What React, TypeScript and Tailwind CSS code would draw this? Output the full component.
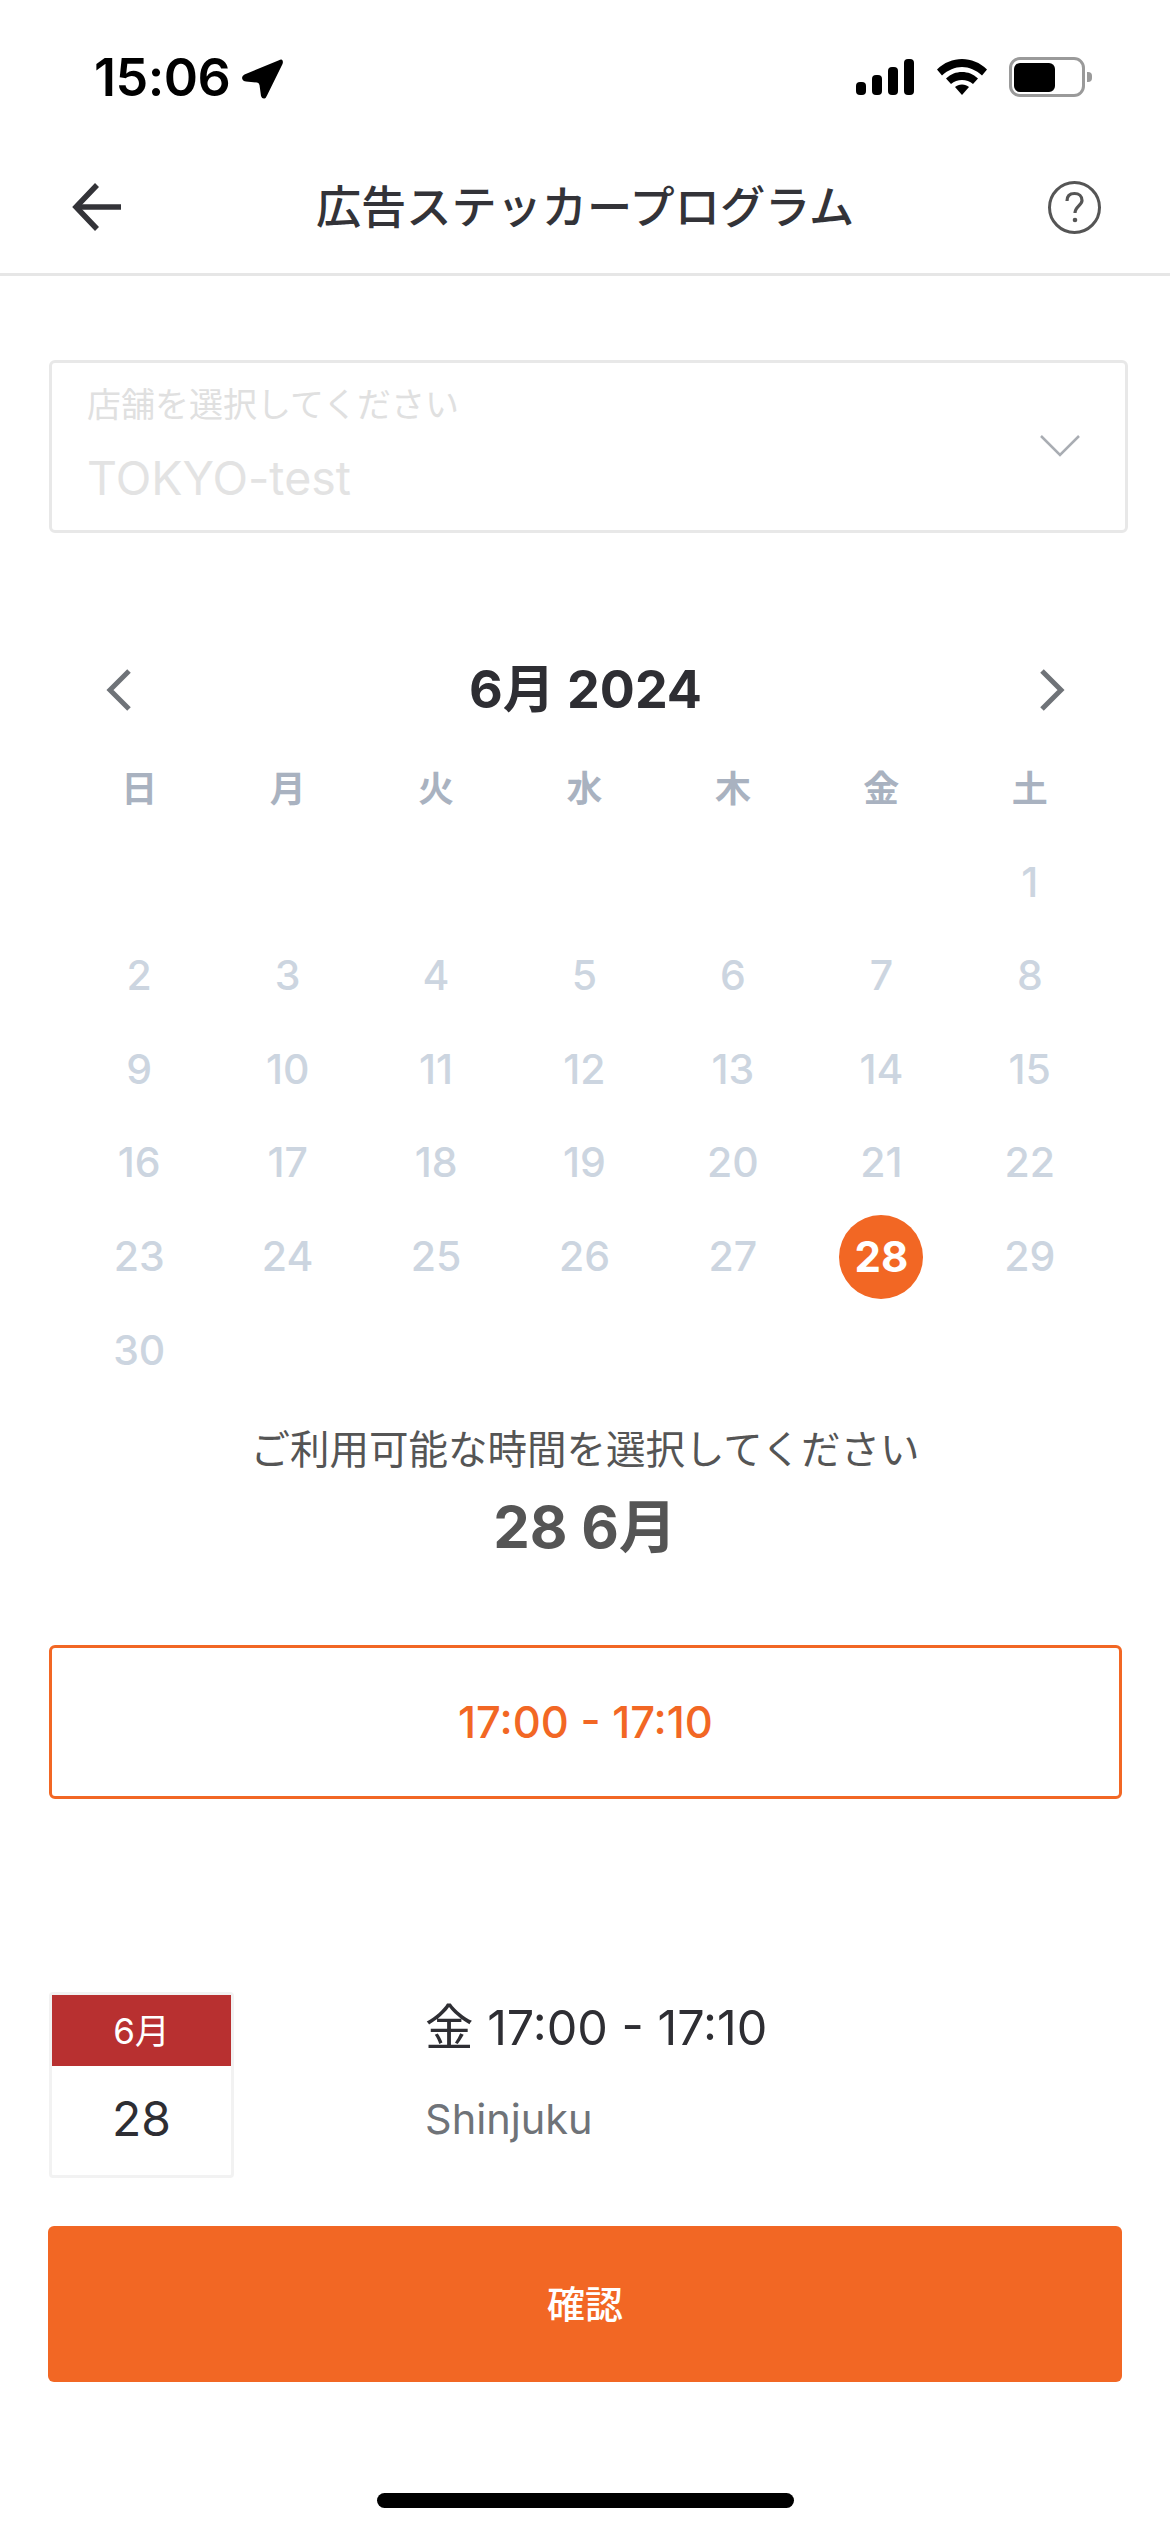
import React from "react";

const FONT = "[font-family:Inter,'Noto_Sans_CJK_JP',sans-serif]";
const WEEK = ["日", "月", "火", "水", "木", "金", "土"];
const DAYS: (number | null)[] = [null, null, null, null, null, null, ...Array.from({ length: 30 }, (_, i) => i + 1)];

function StatusBar() {
  return (
    <div className="flex h-[140px] items-start justify-between pt-[56px] pl-[94px] pr-[78px]">
      <div className="flex items-center gap-[12px]">
        <span className="text-[52px] leading-[44px] font-semibold text-black tracking-[-0.5px]">15:06</span>
        <svg width="41" height="40" viewBox="0 0 41 40" className="mt-[1px]">
          <path d="M37 1.2 L2.5 15.5 Q-1 17.5 0.5 20.5 Q1.5 22.5 4 22.5 L15 23.5 Q17 23.5 17.5 26 L19 37 Q20 40 22.5 39.5 Q24 39 25 36.5 L40.5 5 Q41.5 2 40 0.8 Q38.8 0.2 37 1.2Z" fill="#000" />
        </svg>
      </div>
      <div className="flex items-start pt-[3px]">
        <svg width="58" height="36" viewBox="0 0 58 36">
          <rect x="0" y="23" width="10" height="13" rx="4" fill="#000" />
          <rect x="16" y="16" width="10" height="20" rx="4" fill="#000" />
          <rect x="32" y="8" width="10" height="28" rx="4" fill="#000" />
          <rect x="48" y="0" width="10" height="36" rx="4" fill="#000" />
        </svg>
        <svg width="50" height="36" viewBox="0 0 50 36" className="ml-[23px]">
          <path d="M25 0 C34 0 43 3.5 50 10.5 L45 16.5 C39 11 32 8 25 8 C18 8 11 11 5 16.5 L0 10.5 C7 3.5 16 0 25 0Z" fill="#000" />
          <path d="M25 13 C31 13 36 15 41 19.5 L36 25 C33 22.5 29 21 25 21 C21 21 17 22.5 14 25 L9 19.5 C14 15 19 13 25 13Z" fill="#000" />
          <path d="M25 25.5 C28 25.5 30 26.5 32 28 L25 36 L18 28 C20 26.5 22 25.5 25 25.5Z" fill="#000" />
        </svg>
        <div className="ml-[22px] -mt-[2px] flex items-center">
          <div className="flex h-[40px] w-[76px] items-center rounded-[11px] border-[3px] border-[#9a9a9a] pl-[2px]">
            <div className="h-[29px] w-[41px] rounded-[6px] bg-black" />
          </div>
          <div className="ml-[2px] h-[10px] w-[5px] rounded-r-[4px] bg-[#9a9a9a]" />
        </div>
      </div>
    </div>
  );
}

function Header() {
  return (
    <div className="flex h-[136px] items-center justify-between border-b-[3px] border-[#e6e6e6] pl-[72px] pr-[69px]">
      <svg width="50" height="48" viewBox="0 0 50 48" fill="none" stroke="#333338" strokeWidth="5.5">
        <path d="M25 2 L4 24 L25 46" />
        <path d="M4 24 H49" />
      </svg>
      <div className="mt-[3px] text-[45.2px] leading-[60px] font-medium text-[#333338]">広告ステッカープログラム</div>
      <svg width="53" height="53" viewBox="0 0 53 53" fill="none" className="mt-[1px]">
        <circle cx="26.5" cy="26.5" r="25" stroke="#555" strokeWidth="3" />
        <path d="M19 20 C19 15 22 12.5 26.5 12.5 C31 12.5 34 15.5 34 19.5 C34 24 27 25.5 27 32" stroke="#555" strokeWidth="3.2" />
        <circle cx="27" cy="39" r="2.3" fill="#555" />
      </svg>
    </div>
  );
}

function Calendar() {
  return (
    <div className="mx-[16px] mt-[127px] w-[1039px]">
      <div className="flex h-[60px] items-center justify-between pl-[41px] pr-[39px]">
        <svg width="26" height="42" viewBox="0 0 26 42" fill="none" stroke="#6f7378" strokeWidth="5">
          <path d="M23 2 L4 21 L23 40" />
        </svg>
        <div className="text-[52px] leading-[60px] font-bold text-[#2e2e33]">6月 2024</div>
        <svg width="26" height="42" viewBox="0 0 26 42" fill="none" stroke="#6f7378" strokeWidth="5">
          <path d="M3 2 L22 21 L3 40" />
        </svg>
      </div>
      <div className="mt-[22px] grid grid-cols-7 auto-rows-[93.6px]">
        {WEEK.map((w) => (
          <div key={w} className="flex items-center justify-center text-[36px] font-bold text-[#a9b2c0]">
            {w}
          </div>
        ))}
        {DAYS.map((d, i) => (
          <div key={i} className="flex items-center justify-center">
            {d === 28 ? (
              <div className="flex h-[84px] w-[84px] items-center justify-center rounded-full bg-[#f26724] text-[42px] font-bold text-white">
                {d}
              </div>
            ) : (
              d !== null && <span className="text-[41px] font-medium text-[#ccd5e0]">{d}</span>
            )}
          </div>
        ))}
      </div>
    </div>
  );
}

export default function App() {
  return (
    <div className={`${FONT} flex h-[2532px] w-[1170px] flex-col overflow-hidden bg-white`}>
      <StatusBar />
      <Header />
      <div className="flex flex-1 flex-col pl-[49px]">
        <div className="mt-[84px] flex h-[173px] w-[1079px] items-center justify-between rounded-[6px] border-[3px] border-[#e8e8e8] pl-[35px] pr-[44px]">
          <div className="flex flex-col -mt-[8px]">
            <div className="text-[34px] leading-[44px] text-[#e0e0e0]">店舗を選択してください</div>
            <div className="mt-[26px] text-[46.5px] leading-[50px] text-[#e3e3e3]">TOKYO-test</div>
          </div>
          <svg width="42" height="24" viewBox="0 0 42 24" fill="none" stroke="#a9adb3" strokeWidth="2.5" className="mt-[-2px]">
            <path d="M2 2 L21 21 L40 2" />
          </svg>
        </div>
        <Calendar />
        <div className="mt-[29px] w-[1072px] text-center text-[39.5px] leading-[48px] text-[#555]">
          ご利用可能な時間を選択してください
        </div>
        <div className="mt-[21px] w-[1072px] text-center text-[58px] leading-[64px] font-bold text-[#555]">
          28 6月
        </div>
        <div className="mt-[86px] flex h-[154px] w-[1073px] items-center justify-center rounded-[6px] border-[3px] border-[#f26724] text-[43.5px] font-medium text-[#f26724]">
          17:00 - 17:10
        </div>
        <div className="mt-[193px] flex items-start">
          <div className="flex h-[186px] w-[185px] flex-col rounded-[4px] border-[3px] border-[#f2f2f2]">
            <div className="flex h-[72px] items-center justify-center bg-[#b83030] text-[35px] text-white">6月</div>
            <div className="flex h-[110px] items-center justify-center pb-[4px] text-[48px] text-[#2e2e33]">28</div>
          </div>
          <div className="ml-[191px] flex flex-col">
            <div className="mt-[8px] text-[48.5px] leading-[56px] text-[#2e2e33]">金 17:00 - 17:10</div>
            <div className="mt-[35px] text-[41.5px] leading-[56px] text-[#6f7378]">Shinjuku</div>
          </div>
        </div>
        <div className="-ml-[1px] mt-[48px] flex h-[156px] w-[1074px] items-center justify-center rounded-[6px] bg-[#f26724] text-[38px] font-medium text-white">
          確認
        </div>
        <div className="-ml-[49px] mt-[111px] flex justify-center">
          <div className="h-[15px] w-[417px] rounded-full bg-black" />
        </div>
      </div>
    </div>
  );
}
